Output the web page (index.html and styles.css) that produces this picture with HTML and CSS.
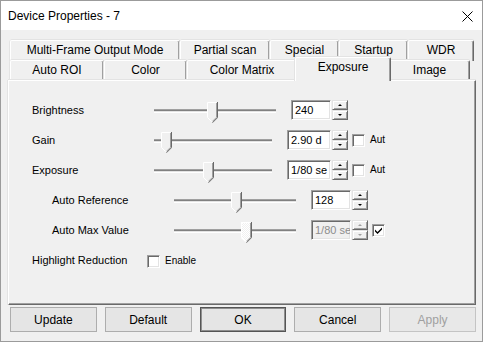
FILE: index.html
```html
<!DOCTYPE html>
<html lang="en">
<head>
  <meta charset="UTF-8">
  <title>Device Properties - 7</title>
  <link rel="stylesheet" href="styles.css">
</head>
<body>
  <svg class="defs" width="0" height="0">
    <defs>
      <pattern id="dots" width="2" height="2" patternUnits="userSpaceOnUse">
        <rect width="2" height="2" fill="#f0f0f0"/>
        <rect width="1" height="1" fill="#ffffff"/>
        <rect x="1" y="1" width="1" height="1" fill="#ffffff"/>
      </pattern>
      <symbol id="thumb" viewBox="0 0 11 21">
        <path d="M0 0 H11 V16 L5.5 21 L0 16 Z" fill="inherit"/>
        <path d="M0.5 15.5 V0.5 H9.5" stroke="#ffffff" fill="none"/>
        <path d="M0.5 15.5 L5 20" stroke="#ffffff" fill="none"/>
        <path d="M10.5 0 V15.7 L5.5 20.7" stroke="#696969" fill="none"/>
        <path d="M9.5 1 V15.3 L5.5 19.3" stroke="#a0a0a0" fill="none"/>
      </symbol>
    </defs>
  </svg>

  <div class="window">
    <div class="titlebar">
      <span class="title">Device Properties - 7</span>
      <svg class="close" width="11" height="11" viewBox="0 0 11 11">
        <path d="M0.5 0.5 L10.5 10.5 M10.5 0.5 L0.5 10.5" stroke="#000" stroke-width="1"/>
      </svg>
    </div>

    <div class="client">
      <div class="tabs">
        <div class="tabrow">
          <div class="tab w170">Multi-Frame Output Mode</div>
          <div class="tab w90">Partial scan</div>
          <div class="tab w69">Special</div>
          <div class="tab w69">Startup</div>
          <div class="tab w66">WDR</div>
        </div>
        <div class="tabrow">
          <div class="tab w94">Auto ROI</div>
          <div class="tab w83">Color</div>
          <div class="tab w110">Color Matrix</div>
          <div class="tab w96 active">Exposure</div>
          <div class="tab w81">Image</div>
        </div>
      </div>

      <div class="panel">
        <div class="row">
          <span class="label">Brightness</span>
          <div class="slider">
            <div class="track"></div>
            <svg class="thumb" style="left:53px"><use href="#thumb"/></svg>
          </div>
          <div class="edit">240</div>
          <div class="spin"><span class="up"></span><span class="down"></span></div>
        </div>

        <div class="row">
          <span class="label">Gain</span>
          <div class="slider short">
            <div class="track"></div>
            <svg class="thumb" style="left:7px"><use href="#thumb"/></svg>
          </div>
          <div class="edit wide">2.90 d</div>
          <div class="spin"><span class="up"></span><span class="down"></span></div>
          <span class="check"></span>
          <span class="small">Aut</span>
        </div>

        <div class="row">
          <span class="label">Exposure</span>
          <div class="slider short">
            <div class="track"></div>
            <svg class="thumb" style="left:49px"><use href="#thumb"/></svg>
          </div>
          <div class="edit wide">1/80 se</div>
          <div class="spin"><span class="up"></span><span class="down"></span></div>
          <span class="check"></span>
          <span class="small">Aut</span>
        </div>

        <div class="row sub">
          <span class="label">Auto Reference</span>
          <div class="slider">
            <div class="track"></div>
            <svg class="thumb" style="left:57px"><use href="#thumb"/></svg>
          </div>
          <div class="edit">128</div>
          <div class="spin"><span class="up"></span><span class="down"></span></div>
        </div>

        <div class="row sub">
          <span class="label">Auto Max Value</span>
          <div class="slider">
            <div class="track"></div>
            <svg class="thumb disabled" style="left:67px"><use href="#thumb"/></svg>
          </div>
          <div class="edit disabled">1/80 se</div>
          <div class="spin disabled"><span class="up"></span><span class="down"></span></div>
          <span class="check checked">
            <svg width="7" height="7" viewBox="0 0 7 7"><path d="M0 2.5 L2.5 5 L7 0.5 L7 2.5 L2.5 7 L0 4.5 Z" fill="#000"/></svg>
          </span>
        </div>

        <div class="row">
          <span class="label narrow">Highlight Reduction</span>
          <span class="check"></span>
          <span class="small">Enable</span>
        </div>
      </div>

      <div class="buttons">
        <button class="btn">Update</button>
        <button class="btn">Default</button>
        <button class="btn default">OK</button>
        <button class="btn">Cancel</button>
        <button class="btn" disabled>Apply</button>
      </div>
    </div>
  </div>
</body>
</html>
```

FILE: styles.css
```css
* {
  box-sizing: border-box;
}

body {
  margin: 0;
  font-family: "Liberation Sans", Arial, sans-serif;
  font-size: 12px;
  color: #000;
}

.defs {
  position: absolute;
}

.window {
  width: 483px;
  height: 342px;
  border: 1px solid #9b9b9b;
  background: #f0f0f0;
  display: flex;
  flex-direction: column;
}

.titlebar {
  height: 29px;
  background: #fff;
  display: flex;
  align-items: center;
  justify-content: space-between;
  padding: 1px 9px 0 7px;
}

.title {
  font-size: 12px;
}

.client {
  padding: 10px 6px 0 7px;
}

/* tabs */
.tabs {
  margin: 0 1px 0 2px;
}

.tabrow {
  display: flex;
  height: 20px;
}

.tab {
  height: 21px;
  text-align: center;
  line-height: 19px;
  background: #f0f0f0;
  border-top: 1px solid #fff;
  border-left: 1px solid #fff;
  border-right: 1px solid #696969;
  box-shadow: inset -1px 0 #a0a0a0, 0 -1px #e3e3e3, -1px 0 #e3e3e3;
  border-radius: 2px 2px 0 0;
}

.tab.active {
  position: relative;
  z-index: 2;
  height: 24px;
  margin: -3px -2px 0;
  line-height: 19px;
}

.w170 { width: 170px; }
.w90 { width: 90px; }
.w69 { width: 69px; }
.w66 { width: 66px; }
.w94 { width: 94px; }
.w83 { width: 83px; }
.w110 { width: 110px; }
.w96 { width: 96px; }
.w81 { width: 81px; }

/* property page */
.panel {
  position: relative;
  z-index: 1;
  height: 225px;
  border-top: 1px solid #fff;
  border-left: 1px solid #fff;
  border-right: 1px solid #696969;
  border-bottom: 1px solid #696969;
  box-shadow: inset -1px -1px #a0a0a0, 0 -1px #e3e3e3, -1px 0 #e3e3e3;
  padding: 19px 0 0 23px;
  display: flex;
  flex-direction: column;
  gap: 10px;
  font-size: 11px;
}

.row {
  display: flex;
  align-items: flex-start;
  height: 20px;
}

.row.sub {
  padding-left: 20px;
}

.label {
  width: 122px;
  line-height: 21px;
}

.label.narrow {
  width: 115px;
}

.slider {
  position: relative;
  width: 122px;
  height: 20px;
  flex: none;
}

.slider.short {
  width: 118px;
}

.track {
  margin-top: 9px;
  height: 4px;
  border-top: 1px solid #a0a0a0;
  border-bottom: 1px solid #fff;
  background: #808080;
  box-shadow: inset 0 -1px #e3e3e3;
}

.thumb {
  position: absolute;
  top: 2px;
  width: 11px;
  height: 21px;
  fill: #f0f0f0;
}

.thumb.disabled {
  fill: url(#dots);
}

.edit {
  width: 40px;
  height: 20px;
  margin-left: 15px;
  flex: none;
  background: #fff;
  border: 1px solid;
  border-color: #a0a0a0 #fff #fff #a0a0a0;
  box-shadow: inset 1px 1px #696969, inset -1px -1px #e3e3e3;
  padding: 3px 0 0 3px;
  font-size: 11px;
  line-height: 12px;
  white-space: nowrap;
  overflow: hidden;
}

.edit.wide {
  width: 44px;
}

.edit.disabled {
  background: #f0f0f0;
  color: #8d8d8d;
}

.spin {
  width: 16px;
  height: 20px;
  margin-left: 1px;
  display: flex;
  flex-direction: column;
}

.spin span {
  height: 10px;
  background: #f0f0f0;
  border: 1px solid;
  border-color: #e3e3e3 #696969 #696969 #e3e3e3;
  box-shadow: inset 1px 1px #fff, inset -1px -1px #a0a0a0;
  display: flex;
  align-items: center;
  justify-content: center;
}

.spin span::after {
  content: "";
  border-left: 2px solid transparent;
  border-right: 2px solid transparent;
}

.spin .up::after {
  border-bottom: 2px solid #000;
}

.spin .down::after {
  border-top: 2px solid #000;
}

.spin.disabled .up::after {
  border-bottom-color: #a0a0a0;
}

.spin.disabled .down::after {
  border-top-color: #a0a0a0;
}

.check {
  width: 13px;
  height: 13px;
  margin: 4px 0 0 4px;
  flex: none;
  background: #fff;
  border: 1px solid;
  border-color: #a0a0a0 #fff #fff #a0a0a0;
  box-shadow: inset 1px 1px #696969, inset -1px -1px #e3e3e3;
  display: flex;
  align-items: center;
  justify-content: center;
}

.row .label.narrow + .check {
  margin: 5px 0 0 0;
}

.small {
  font-size: 10px;
  line-height: 20px;
  margin-left: 5px;
}

.label.narrow ~ .small {
  line-height: 22px;
}

/* dialog buttons */
.buttons {
  display: flex;
  gap: 8px;
  margin: 2px 0 0 2px;
}

.btn {
  width: 87px;
  height: 25px;
  padding: 0;
  background: #e5e5e5;
  border: 1px solid #adadad;
  font-family: "Liberation Sans", Arial, sans-serif;
  font-size: 12px;
  color: #000;
}

.btn.default {
  border-color: #555;
  box-shadow: inset 0 0 0 1px #8f8f8f;
}

.btn:disabled {
  color: #a0a0a0;
  background: #e8e8e8;
  border-color: #c4c4c4;
}
```
